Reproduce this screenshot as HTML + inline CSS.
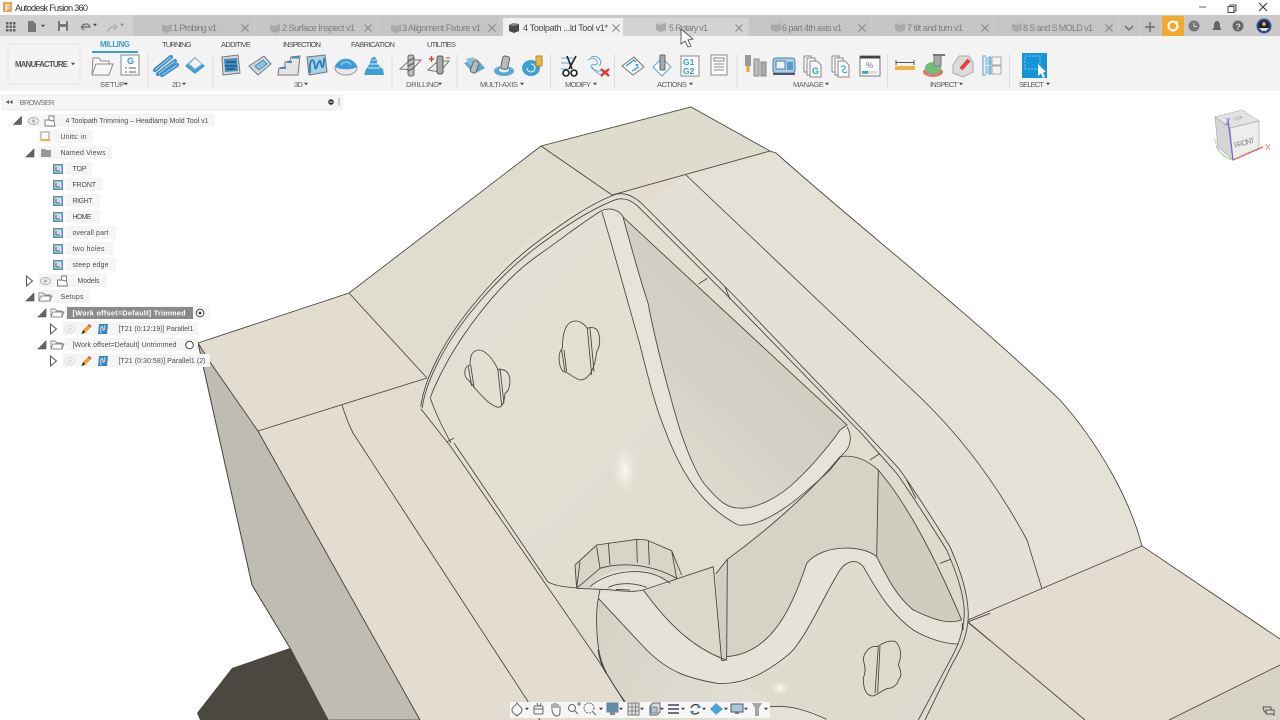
<!DOCTYPE html>
<html><head><meta charset="utf-8"><title>Autodesk Fusion 360</title>
<style>
html,body{margin:0;padding:0;background:#fff;width:1280px;height:720px;overflow:hidden}
svg{display:block}
text{font-family:"Liberation Sans",sans-serif}
.tb{font-size:9px;fill:#7e7e7e}
.rt{font-size:7.6px;fill:#4e4e4e}
.lb{font-size:7.6px;fill:#5e5e5e}
.br{font-size:7px;fill:#4e4e4e}
.x{stroke:#888;stroke-width:1.1;fill:none}
.ln{fill:none;stroke:#45453d;stroke-width:.85}
.z{fill:none;stroke:#45453d;stroke-width:2.6}
.rowbg{fill:#f5f5f5}
</style></head><body>
<svg width="1280" height="720" viewBox="0 0 1280 720" xmlns="http://www.w3.org/2000/svg">
<defs>
<filter id="b" x="-2%" y="-2%" width="104%" height="104%"><feGaussianBlur stdDeviation="0.35"/></filter>
<radialGradient id="hl"><stop offset="0" stop-color="#fbf9f2"/><stop offset=".5" stop-color="#f0ede3" stop-opacity=".6"/><stop offset="1" stop-color="#e6e3d8" stop-opacity="0"/></radialGradient>
<linearGradient id="st" x1="0.85" y1="0.1" x2="0.25" y2="0.9"><stop offset="0" stop-color="#cecbbf"/><stop offset=".6" stop-color="#d2d0c4"/><stop offset="1" stop-color="#dedbcf"/></linearGradient>
<linearGradient id="wl" x1="0" y1="0" x2="1" y2="0.3"><stop offset="0" stop-color="#d4d1c5"/><stop offset="1" stop-color="#e4e1d6"/></linearGradient>
<linearGradient id="fl" x1="0" y1="0" x2="1" y2="1"><stop offset="0" stop-color="#e4e1d5"/><stop offset="1" stop-color="#dcdacd"/></linearGradient>
<g id="box3"><path d="M-5 -3 L-1 -5 L5 -4 L5 3 L0 5 L-5 3Z" fill="#a9a9a9"/><path d="M-5 -3 L0 -2 L5 -4 L-1 -5Z" fill="#c4c4c4"/></g>
<g id="view"><rect x="-5" y="-5" width="10" height="10" fill="#5d8fb0"/><rect x="-3.5" y="-3.5" width="7" height="7" fill="#cfe0ea"/><path d="M-2 -2V2H2" stroke="#356b8f" fill="none" stroke-width="1"/></g>
<g id="eye"><ellipse cx="0" cy="0" rx="5" ry="3.4" fill="none" stroke="#b5b5b5" stroke-width="1.1"/><circle r="1.8" fill="#b5b5b5"/></g>
<g id="comp"><path d="M-5 -1 L-1 -1 L-1 -5 L4 -5 L4 0 L5 5 L-5 5Z M-1 -1 L4 0" fill="#fff" stroke="#777" stroke-width=".9"/></g>
<g id="fold"><path d="M-6 -4H-2L0 -2H5V4H-6Z M-6 4L-4 -1H7L5 4" fill="#fff" stroke="#888" stroke-width=".9"/></g>
<g id="tridn"><path d="M-4 4 L4 4 L4 -4Z" fill="#666" stroke="#444" stroke-width=".6"/></g>
<g id="triR"><path d="M-3 -5 L3 0 L-3 5Z" fill="#fff" stroke="#555" stroke-width="1"/></g>
<g id="pen"><path d="M-5 5 L-3.5 1 L2.5 -5 L5 -2.5 L-1 3.5Z" fill="#ef9a2c"/><path d="M-5 5 L-3.5 1 L-1 3.5Z" fill="#333"/><path d="M2.5 -5 L5 -2.5 L4 -1.5 L1.5 -4Z" fill="#d8503c"/></g>
<g id="par"><path d="M-4 -5H5L4 5H-5Z" fill="#3b86b8"/><path d="M-2 4 C-3 -3 -1 -5 0 0 C1 4 2 -2 2 -4" fill="none" stroke="#cfe6f3" stroke-width="1"/></g>
<g id="dd"><path d="M-2 -1.2H2L0 1.2Z" fill="#444"/></g>
<g id="xx"><path d="M-3.5 -3.5L3.5 3.5M3.5 -3.5L-3.5 3.5" class="x"/></g>
</defs>
<rect width="1280" height="720" fill="#fff"/>

<!-- MODEL -->
<path d="M198 343L210 362L258 431L420 720H328L290 648L252 585Z" fill="#bfbdb1" stroke="#45453d" stroke-width=".85"/>
<path d="M290 648L232 668L197 713L200 720H328Z" fill="#4a4840"/>
<path d="M198 343L349 293L541 146L691 107L770 151L776 153C860 228 960 305 1060 400C1100 445 1130 500 1142 546L1280 639V720H420L258 431L210 362Z" fill="#e2ddd0"/>
<path d="M541 146L691 107L770 151L612 195Z" fill="#dfdbcf"/>
<path d="M351 293L541 146L612 195L427 378Z" fill="#e0dcd0"/>
<path d="M776 153C860 228 960 305 1060 400C1100 445 1130 500 1142 546L1042 589C1027 540 1000 490 967 443C950 425 935 412 923 400L686 175Z" fill="#e5e1d6"/>
<path d="M686 175L923 400C967 443 1000 490 1027 540L1042 589L968 620L880 443L643 205Z" fill="#e4e0d5"/>
<path d="M968 622L1085 720H920Z" fill="#dedbce"/>
<path d="M1169 720L1280 665V720Z" fill="#d6d2c6"/>
<!-- pocket floor -->
<path d="M421 407C424 392 430 375 440 355C460 315 500 265 533 237C560 218 590 200 613 193C622 191 634 195 643 205L863 430L900 470C917 493 935 522 950 547C960 567 967 585 968 613C968 625 965 635 963 640L920 720H628L598 660L548 582L447 443Z" fill="url(#fl)"/>
<ellipse cx="625" cy="470" rx="13" ry="26" fill="url(#hl)"/>
<!-- strut band and grey region -->
<path d="M602 212C615 255 630 310 640 345C650 385 655 405 665 430C680 470 700 505 738 525C765 528 800 498 830 470L842 455C852 447 852 435 847 427L840 430L623 217Z" fill="#e6e3d8"/>
<path d="M623 217L847 425L840 430C830 445 810 468 797 480C780 497 755 510 738 508C728 508 720 502 707 487C700 480 690 460 680 430C668 390 655 340 648 303C642 285 632 250 623 217Z" fill="url(#st)"/>
<!-- lower wall -->
<g transform="translate(530 430) scale(.33333)">
<path d="M205 505C198 540 198 600 205 650C210 700 225 730 285 815L300 870H900C830 830 780 825 720 830L700 800L205 500Z" fill="url(#wl)"/>
<path d="M205 505L350 660C420 730 480 745 560 760C650 765 720 720 780 670C830 620 880 500 930 420C950 392 980 385 1000 410C1040 480 1080 550 1150 600C1200 630 1250 642 1285 642L1298 580L1230 578C1150 540 1080 450 1040 380C1000 345 880 340 830 400C790 520 730 670 590 680L575 690L340 480L205 490Z" fill="#e5e2d7"/>
<path d="M592 388C700 310 840 190 930 80C960 75 1000 80 1045 120L1040 380C1000 345 880 340 830 400C790 520 730 670 590 680Z" fill="#d5d3c6"/>
<path d="M1045 120C1130 220 1210 370 1295 570C1260 580 1230 578 1150 540C1100 500 1070 440 1040 380Z" fill="#cfccc0"/>
<path d="M340 480L550 410L575 690C490 650 420 590 340 480Z" fill="#dad7cb"/>
<path d="M557 432L592 388L590 690L575 692Z" fill="#d1cfc3"/>
<path d="M135 405L200 345L320 328L350 330L425 362L455 435L420 465L340 482L140 475Z" fill="#d7d4c8"/>
<path d="M180 472C210 415 350 390 420 460L340 482Z" fill="#e4e1d6"/>
<ellipse cx="750" cy="775" rx="28" ry="22" fill="url(#hl)"/>
</g>

<!-- structural lines -->
<g class="ln">
<path d="M198 343L349 293L541 146L691 107L770 151L776 153C860 228 960 305 1060 400C1100 445 1130 500 1142 546L1280 639"/>
<path d="M198 343L210 362L258 431L420 720M198 343L252 585L290 648L328 720"/>
<path d="M349 293L427 378M258 431L427 378M342 405C346 418 350 427 353 433L540 720"/>
<path d="M541 146L612 195L770 151M686 175L923 400C967 443 1000 490 1027 540L1042 589"/>
<path d="M968 620L1142 546M968 622L1085 720M1169 720L1280 665"/>
<path d="M602 212C615 255 630 310 640 345C650 385 655 405 665 430C680 470 700 505 738 525C765 528 800 498 830 470L842 455C852 447 852 435 847 427"/>
<path d="M623 217C632 250 642 285 648 303C655 340 668 390 680 430C690 460 700 480 707 487C720 502 728 508 738 508C755 510 780 497 797 480C810 468 830 445 840 430L847 425L623 217"/>
<path d="M421 409L451 447L598 660L625 703M430 397C436 415 444 430 451 443M454 443L548 582C556 586 565 587 577 588M447 442L454 438"/>
</g>
<!-- rim, pocket top -->
<g transform="translate(400 180) scale(.33333)">
<path class="z" d="M62 680C70 630 85 590 110 540C170 420 290 280 400 195C480 135 570 70 650 42C680 37 705 50 730 75L1000 345L1389 750"/>
<path class="z" d="M66 685C74 635 90 595 115 545C175 425 295 290 405 205C485 145 575 85 650 58C675 52 695 62 715 80L990 355L1374 750"/>
<path class="z" d="M92 650C150 500 290 310 420 222C480 180 550 125 605 92C630 80 660 90 672 115"/>
<path class="z" d="M895 312L922 295M975 320L990 358"/>
<!-- holes -->
<path class="z" d="M235 510C215 512 210 530 210 555C190 560 190 590 205 600C215 610 222 622 222 622C240 640 265 675 295 682C308 680 312 670 315 640C332 630 335 590 320 575C310 565 300 570 295 570C280 540 260 510 235 510Z"/>
<path class="z" d="M293 565L305 675M300 565L312 670M205 560L215 618M212 555L222 622"/>
<path class="z" d="M525 423C500 425 488 450 487 505C475 515 472 555 490 575C505 575 520 595 540 600C570 600 585 560 590 515C605 495 600 450 585 445C575 440 562 445 562 445C550 430 540 423 525 423Z"/>
<path class="z" d="M562 445L575 585M570 445L582 575M485 510L495 575M492 510L500 575"/>
</g>
<!-- lower section -->
<g transform="translate(530 430) scale(.33333)">
<path class="z" d="M930 80C960 75 1000 80 1045 120C1130 220 1210 370 1295 570C1260 580 1230 578 1150 540C1100 500 1070 440 1040 380"/>
<path class="z" d="M1045 120L1040 380C1000 345 880 340 830 400C790 520 730 670 590 680"/>
<path class="z" d="M592 388C700 310 840 190 930 80"/>
<path class="z" d="M205 505L350 660C420 730 480 745 560 760C650 765 720 720 780 670C830 620 880 500 930 420C950 392 980 385 1000 410C1040 480 1080 550 1150 600C1200 630 1250 642 1285 642"/>
<path class="z" d="M340 480C420 590 490 650 575 685L590 690"/>
<path class="z" d="M592 388L590 690L575 692L550 410L340 480C300 490 250 478 210 478L140 475M557 432L592 388M205 505C198 540 198 600 205 650C210 700 225 730 285 815M210 478L205 505"/>
<path style="fill:none;stroke:#45453d;stroke-width:5" d="M205 660C210 690 218 710 228 728M1298 580L1298 600"/>
<path class="z" d="M135 405L200 345L320 328L350 330L425 362L455 435M135 405L140 475M150 395L140 475M200 350L210 415M235 338L240 405M320 328L322 398M355 332L358 405M425 362L440 445M140 475L210 415C260 400 350 395 440 445M180 470C230 425 350 400 420 460M235 472C270 455 320 460 350 472M258 478L300 480"/>
<!-- rim lower right -->
<path class="z" d="M1000 0C1040 45 1080 85 1110 120C1160 190 1210 270 1260 350C1290 420 1312 480 1315 550C1315 620 1290 660 1265 705L1185 870"/>
<path class="z" d="M985 0C1025 45 1065 90 1100 130C1150 200 1200 280 1250 360C1280 430 1302 490 1303 550C1300 620 1275 665 1250 710L1165 870"/>
<path class="z" d="M1020 90L1050 70M1230 400L1262 388M1130 150L1158 205M1315 575L1380 550M1315 578L1380 632"/>
<path class="z" d="M720 830C780 825 830 840 890 868"/>
<!-- hole 3 -->
<path class="z" d="M1040 650C1020 645 1000 670 1000 690C1003 705 1010 715 1000 745C1000 780 1010 798 1030 798C1050 790 1060 778 1075 775C1090 775 1105 760 1105 750C1115 740 1115 725 1105 705C1115 680 1115 650 1095 634C1075 630 1060 640 1040 650Z"/>
<path class="z" d="M1045 650L1035 790M1050 648L1043 788"/>
</g>

<!-- UI -->
<g filter="url(#b)">
<!-- title bar -->
<rect x="3" y="2" width="9" height="10" fill="#e8a35a"/>
<text x="5" y="11" font-size="9" font-weight="bold" fill="#fff">F</text>
<text x="15" y="11" font-size="9.2" fill="#333" textLength="73">Autodesk Fusion 360</text>
<rect x="1199" y="6.5" width="7" height="1" fill="#666"/>
<rect x="1230" y="5" width="6" height="6" fill="#fff" stroke="#444"/><rect x="1228" y="7" width="6" height="6" fill="#fff" stroke="#444" transform="translate(0 -.5)"/>
<path d="M1259 3L1267 11M1267 3L1259 11" stroke="#333" fill="none"/>

<!-- strip -->
<rect y="15" width="1280" height="21" fill="#c9c9c9"/>
<rect y="15" width="133" height="21" fill="#d1d1d1"/>
<g fill="#666"><rect x="6" y="22" width="2.5" height="2.5"/><rect x="9.5" y="22" width="2.5" height="2.5"/><rect x="13" y="22" width="2.5" height="2.5"/><rect x="6" y="25.5" width="2.5" height="2.5"/><rect x="9.5" y="25.5" width="2.5" height="2.5"/><rect x="13" y="25.5" width="2.5" height="2.5"/><rect x="6" y="29" width="2.5" height="2.5"/><rect x="9.5" y="29" width="2.5" height="2.5"/><rect x="13" y="29" width="2.5" height="2.5"/></g>
<path d="M28 21H33L36 24V32H28Z" fill="#777"/><use href="#dd" x="43" y="26"/>
<rect x="58" y="21" width="10" height="10" rx="1" fill="#777"/><rect x="60" y="21" width="6" height="3" fill="#ddd"/><rect x="60" y="27" width="6" height="4" fill="#ddd"/>
<path d="M81 27H90C89 24 86 23 84 25M81 27L84 24M81 27L84 30" fill="none" stroke="#777" stroke-width="1.4"/><use href="#dd" x="95" y="25"/>
<path d="M117 27C108 26 108 31 108 32M117 27L114 24M117 27L114 30" fill="none" stroke="#aaa" stroke-width="1.2"/><use href="#dd" x="122" y="25" opacity=".5"/>
<g fill="#c5c5c5"><rect x="133" y="16" width="120" height="20"/><rect x="256" y="16" width="121" height="20"/><rect x="379" y="16" width="120" height="20"/><rect x="750" y="16" width="120" height="20"/><rect x="873" y="16" width="120" height="20"/><rect x="996" y="16" width="121" height="20"/><rect x="1120" y="16" width="18" height="20"/><rect x="1141" y="16" width="19" height="20"/></g>
<rect x="623" y="18" width="125" height="18" fill="#d3d3d3"/>
<rect x="503" y="18" width="120" height="18" fill="#f0f0f0"/>
<use href="#box3" x="167" y="28"/><use href="#box3" x="275" y="28"/><use href="#box3" x="396" y="28"/><use href="#box3" x="661" y="27"/><use href="#box3" x="776" y="27"/><use href="#box3" x="900" y="27"/><use href="#box3" x="1017" y="27"/>
<g transform="translate(514 28)"><path d="M-5 -3 L-1 -5 L5 -4 L5 3 L0 5 L-5 3Z" fill="#4a4a4a"/><path d="M-5 -3 L0 -2 L5 -4 L-1 -5Z" fill="#888"/></g>
<text class="tb" x="173" y="31" textLength="44">1 Probing v1</text>
<text class="tb" x="282" y="31" textLength="73">2 Surface Inspect v1</text>
<text class="tb" x="402" y="31" textLength="79">3 Alignment Fixture v1</text>
<text x="523" y="31" font-size="9" fill="#444" textLength="85">4 Toolpath ...ld Tool v1*</text>
<text class="tb" x="669" y="31" textLength="39">5 Rotary v1</text>
<text class="tb" x="782" y="31" textLength="60">6 part 4th axis v1</text>
<text class="tb" x="907" y="31" textLength="56">7 tilt and turn v1</text>
<text class="tb" x="1023" y="31" textLength="70">8 S and S MOLD v1</text>
<use href="#xx" x="245" y="28"/><use href="#xx" x="368" y="28"/><use href="#xx" x="492" y="28"/><use href="#xx" x="616" y="28"/><use href="#xx" x="739" y="28"/><use href="#xx" x="862" y="28"/><use href="#xx" x="985" y="28"/><use href="#xx" x="1109" y="28"/>
<path d="M1125 26L1129 30L1133 26" fill="none" stroke="#777" stroke-width="1.6"/>
<path d="M1150 22V32M1145 27H1155" fill="none" stroke="#777" stroke-width="1.8"/>
<rect x="1162" y="16" width="22" height="21" fill="#f3a92e"/>
<circle cx="1173" cy="26" r="4.5" fill="none" stroke="#fff" stroke-width="2"/><path d="M1173 22L1178 21V26" fill="#fff"/>
<circle cx="1194" cy="26" r="5.5" fill="#777"/><path d="M1194 23V26.5H1197" stroke="#ddd" fill="none"/>
<path d="M1217 21C1214 21 1214 25 1214 27L1212.5 30H1221.5L1220 27C1220 25 1220 21 1217 21Z" fill="#666"/>
<circle cx="1238" cy="26" r="5.5" fill="#666"/><text x="1235.6" y="29.5" font-size="8.5" font-weight="bold" fill="#ddd">?</text>
<circle cx="1264" cy="26" r="7.5" fill="#2e4f9a"/><circle cx="1264" cy="26" r="5.5" fill="#222"/><path d="M1259 28H1269L1266 31H1262Z" fill="#ddd"/><circle cx="1264" cy="24" r="2" fill="#b9a38a"/>

<!-- ribbon -->
<rect y="36" width="1280" height="55" fill="#f3f3f3"/>
<rect x="8" y="44" width="72" height="40" rx="2" fill="#f4f4f4" stroke="#e5e5e5"/>
<text x="15" y="67" font-size="7.8" font-weight="bold" fill="#555" textLength="53">MANUFACTURE</text><use href="#dd" x="73" y="64"/>
<text x="100" y="47" font-size="7.8" font-weight="bold" fill="#3a9fc8" textLength="30">MILLING</text>
<rect x="92" y="51" width="46" height="2" fill="#3a9fc8"/>
<text class="rt" x="162" y="47" textLength="29.5">TURNING</text>
<text class="rt" x="221" y="47" textLength="30">ADDITIVE</text>
<text class="rt" x="283" y="47" textLength="38">INSPECTION</text>
<text class="rt" x="351" y="47" textLength="44">FABRICATION</text>
<text class="rt" x="427" y="47" textLength="29">UTILITIES</text>
<g fill="#dedede"><rect x="147.500" y="54" width="1" height="34"/><rect x="212.500" y="54" width="1" height="34"/><rect x="391.500" y="54" width="1" height="34"/><rect x="456.500" y="54" width="1" height="34"/><rect x="550" y="54" width="1" height="34"/><rect x="614" y="54" width="1" height="34"/><rect x="736.500" y="54" width="1" height="34"/><rect x="887" y="54" width="1" height="34"/><rect x="1009" y="54" width="1" height="34"/></g>
<text class="lb" x="100" y="87" textLength="25">SETUP</text><use href="#dd" x="126" y="84"/>
<text class="lb" x="172" y="87" textLength="9">2D</text><use href="#dd" x="184" y="84"/>
<text class="lb" x="294" y="87" textLength="9">3D</text><use href="#dd" x="306" y="84"/>
<text class="lb" x="406" y="87" textLength="33">DRILLING</text><use href="#dd" x="440" y="84"/>
<text class="lb" x="480" y="87" textLength="38">MULTI-AXIS</text><use href="#dd" x="522" y="84"/>
<text class="lb" x="565" y="87" textLength="26">MODIFY</text><use href="#dd" x="595" y="84"/>
<text class="lb" x="657" y="87" textLength="30">ACTIONS</text><use href="#dd" x="691" y="84"/>
<text class="lb" x="793" y="87" textLength="31">MANAGE</text><use href="#dd" x="827" y="84"/>
<text class="lb" x="930" y="87" textLength="28">INSPECT</text><use href="#dd" x="961" y="84"/>
<text class="lb" x="1019" y="87" textLength="25">SELECT</text><use href="#dd" x="1048" y="84"/>

<!-- ribbon icons -->
<g transform="translate(102 66)"><path d="M-10 9L-9 -8H-3L-1 -5H7V-1" fill="#f7f7f7" stroke="#8a8a8a"/><path d="M-10 9L-6 -2H11L7 9Z" fill="#f7f7f7" stroke="#8a8a8a"/></g>
<g transform="translate(130 65)"><rect x="-9" y="-10" width="18" height="20" fill="#fbfbfb" stroke="#888"/><text x="-3" y="-1" font-size="9" font-weight="bold" fill="#2d9bd0">G</text><path d="M-5 3H-3M-1 3H6M-5 7H-3M-1 7H6" stroke="#666"/></g>
<g transform="translate(166 66)"><path d="M-11 4L5 -9M-8 8L9 -5M-4 9L11 -1" stroke="#3e8fc6" stroke-width="4.2" stroke-linecap="round" fill="none"/><path d="M-11 4L5 -9M-8 8L9 -5M-4 9L11 -1" stroke="#a8d3ea" stroke-width="1" fill="none"/></g>
<g transform="translate(195 66)"><path d="M-10 0L0 -9L10 0L0 8Z" fill="#3e9fd2"/><path d="M-6 -2L0 -8L7 -2L0 3Z" fill="#f3f3f3" stroke="#bbb"/></g>
<g transform="translate(231 65)"><path d="M-9 -8L7 -10L9 8L-8 10Z" fill="#d8d8d8" stroke="#777"/><path d="M-7 -6L6 -7L7 6L-6 7Z" fill="#3e8fc6"/><path d="M-5 -3H5M-6 1H6M-5 4H4" stroke="#123e60"/></g>
<g transform="translate(260 66)"><path d="M-11 0L4 -10L11 -2L-2 9Z" fill="#d8d8d8" stroke="#6a7f8e"/><path d="M-5 0L3 -6L7 -2L-1 4Z" fill="#8fc0dc" stroke="#3e8fc6"/></g>
<g transform="translate(289 66)"><path d="M-11 9L-10 2L-4 1V-4L1 -5L2 -9L11 -10L9 9Z" fill="#e4e4e4" stroke="#777"/><path d="M-9 2H-3M-2 -4H3M3 -8.500H10" stroke="#3e8fc6" stroke-width="2" fill="none"/></g>
<g transform="translate(317 65)"><path d="M-10 -8L8 -10L10 7L-8 10Z" fill="#a7d1e8" stroke="#777"/><path d="M-7 8C-8 -8 -3 -8 -2 2C-1 9 2 -10 4 -2C5 5 7 3 7 -7" fill="none" stroke="#2f7fb6" stroke-width="1.8"/></g>
<g transform="translate(346 66)"><ellipse cy="2" rx="11" ry="7" fill="#e9e9e9" stroke="#999"/><path d="M-11 1C-8 -10 8 -10 11 1C6 4 -6 4 -11 1Z" fill="#3d9dd4"/><path d="M-5 -1C-3 -5 3 -5 5 -1" stroke="#b8dff3" fill="none"/></g>
<g transform="translate(374 66)"><path d="M-10 9L-8 3C-6 2 -6 -1 -4 -2C-4 -6 -2 -9 0 -9C2 -9 3 -6 3 -3C5 -1 6 2 9 3L10 9Z" fill="#3e9fd2"/><path d="M-6 2H6M-4 -2H4M-2 -6H2" stroke="#d9eef8"/></g>
<g transform="translate(411 66)"><path d="M-11 3L-1 -6H10L1 4Z" fill="#eee" stroke="#777"/><rect x="-3" y="-11" width="6" height="21" rx="2" fill="#bbb" stroke="#666"/><path d="M-3 -5L3 -8M-3 0L3 -3M-3 5L3 2" stroke="#555"/></g>
<g transform="translate(439 66)"><path d="M-11 4L-1 -5H10L1 6Z" fill="#eee" stroke="#777"/><rect x="-2" y="-10" width="6" height="18" rx="2" fill="#aaa" stroke="#555"/><path d="M-10 -7H-5M-7.500 -10V-4" stroke="#e03a2e" stroke-width="1.4"/><path d="M7 -8H11" stroke="#e03a2e"/></g>
<g transform="translate(475 66)"><path d="M-11 -3L2 -7L10 2L-1 8Z" fill="#5aa7d6"/><path d="M-9 -7L-2 -9L6 -3L-4 1Z" fill="#8cc0dc"/><rect x="-3" y="-5" width="6" height="12" rx="2" transform="rotate(20)" fill="#bbb" stroke="#666"/></g>
<g transform="translate(504 66)"><ellipse cy="5" rx="10" ry="5" fill="#5aa7d6"/><ellipse cy="4" rx="5" ry="2.500" fill="#d9eef8"/><rect x="-3" y="-10" width="7" height="13" rx="2" transform="rotate(12)" fill="#bbb" stroke="#666"/></g>
<g transform="translate(532 66)"><ellipse cx="-1" cy="2" rx="9" ry="8" fill="#3e9fd2"/><path d="M-5 2A4 4 0 1 0 -1 -2" stroke="#fff" fill="none"/><rect x="4" y="-10" width="6" height="10" fill="#f0b840" stroke="#b98a20"/></g>
<g transform="translate(569 66)"><path d="M-8 -8H4M-8 -3H4M-8 3H0" stroke="#5aa7d6" fill="none"/><path d="M-2 -10L3 3M7 -10L0 3" stroke="#222" stroke-width="1.6"/><circle cx="-3" cy="7" r="3" fill="none" stroke="#222" stroke-width="1.6"/><circle cx="5" cy="7" r="3" fill="none" stroke="#222" stroke-width="1.6"/></g>
<g transform="translate(598 66)"><path d="M-10 -6C-4 -11 2 -4 -2 -1C-8 -3 -9 2 -3 4C2 7 3 3 8 5M-7 -9C0 -12 6 -4 1 0M-6 1C-3 6 0 8 4 9" fill="none" stroke="#6aa9cf"/><path d="M3 3L11 10M11 3L3 10" stroke="#e03a2e" stroke-width="2.4"/></g>
<g transform="translate(633 66)"><path d="M-11 0L1 -9L11 1L0 9Z" fill="#fafafa" stroke="#777"/><path d="M-7 0L1 -6L3 -4M-1 5L6 1" stroke="#2f9ad0" stroke-width="1.3" fill="none"/><circle cx="4" cy="-1" r="1.300" fill="#2f9ad0"/></g>
<g transform="translate(662 66)"><path d="M-9 1L0 -8L9 1L0 10Z" fill="#fafafa" stroke="#5aa7d6"/><rect x="-2" y="-11" width="5" height="15" rx="1" fill="#aaa" stroke="#666"/></g>
<g transform="translate(690 66)"><rect x="-9" y="-10" width="18" height="20" fill="#fff" stroke="#888"/><text x="-7" y="-1" font-family="Liberation Mono" font-size="8.5" font-weight="bold" fill="#2d9bd0">G1</text><text x="-7" y="8" font-family="Liberation Mono" font-size="8.5" font-weight="bold" fill="#2d9bd0">G2</text></g>
<g transform="translate(719 65)"><rect x="-8" y="-10" width="16" height="20" fill="#fbfbfb" stroke="#888"/><rect x="-5" y="-7" width="10" height="3" fill="none" stroke="#888"/><path d="M-5 -1H5M-5 2H5M-5 5H5" stroke="#888"/></g>
<g transform="translate(755 66)"><rect x="-10" y="-11" width="6" height="11" fill="#999"/><rect x="-8.500" y="0" width="3" height="6" fill="#e8a33c"/><rect x="-1" y="-7" width="5" height="17" fill="#bbb" stroke="#888"/><rect x="6" y="-4" width="5" height="14" fill="#aaa" stroke="#888"/></g>
<g transform="translate(784 66)"><rect x="-11" y="-8" width="22" height="15" rx="3" fill="#a9cfe6" stroke="#4d7f9f"/><rect x="-8" y="-5" width="9" height="8" fill="#e9f1f6" stroke="#4d7f9f"/><rect x="3" y="-4" width="6" height="8" fill="#5a9ac6"/><rect x="-11" y="7" width="22" height="2" fill="#556"/></g>
<g transform="translate(813 66)" fill="#fafafa" stroke="#888"><path d="M-9 -10H-2L-2 6H-9Z"/><path d="M-6 -8H2V9H-6Z"/><path d="M-3 -5H4L8 -1V11H-3Z"/><text x="-1" y="8" font-size="9" font-weight="bold" fill="#2d9bd0" stroke="none">G</text></g>
<g transform="translate(841 66)" fill="#fafafa" stroke="#888"><path d="M-9 -10H-2V6H-9Z"/><path d="M-6 -8H2V9H-6Z"/><path d="M-3 -5H4L8 -1V11H-3Z"/><path d="M0 1C3 -2 6 2 3 3C0 4 2 8 6 6" stroke="#2d9bd0" fill="none"/></g>
<g transform="translate(870 66)"><rect x="-10" y="-10" width="20" height="20" fill="#fafafa" stroke="#777"/><rect x="-10" y="-10" width="20" height="2.500" fill="#444"/><text x="-4" y="2" font-size="8" fill="#777">%</text><rect x="-8" y="5" width="15" height="3" fill="#ddd"/><rect x="-8" y="5" width="6" height="3" fill="#4ea3d6"/></g>
<g transform="translate(905 66)"><path d="M-9 -6V-1M9 -6V-1M-9 -3.500H9" stroke="#555" fill="none"/><rect x="-10" y="0" width="20" height="4" fill="#efb43a"/></g>
<g transform="translate(934 66)"><ellipse cx="-1" cy="6" rx="10" ry="5" fill="#e07a6a"/><ellipse cx="-1" cy="2" rx="8" ry="6" fill="#6fc07a"/><rect x="0" y="-11" width="7" height="11" fill="#aaa" stroke="#777"/><path d="M-1 -11H11" stroke="#777" stroke-width="2"/></g>
<g transform="translate(963 66)"><path d="M-10 -1L-4 -10H6L10 -3V6L0 11L-10 7Z" fill="#dcdcdc" stroke="#aaa"/><path d="M-2 3L6 -6" stroke="#e0433c" stroke-width="4"/></g>
<g transform="translate(992 66)"><rect x="-7" y="-9" width="7" height="8" fill="#a9d1ea"/><rect x="-7" y="0" width="7" height="8" fill="#a9d1ea"/><rect x="0" y="-9" width="9" height="8" fill="#f3f3f3" stroke="#aaa"/><rect x="0" y="0" width="9" height="8" fill="#f3f3f3" stroke="#aaa"/><path d="M-6 -10H-9V9H-6" stroke="#4ea3d6" fill="none"/><path d="M-2 -10V9" stroke="#4ea3d6"/></g>
<rect x="1022" y="53" width="25" height="25" fill="#1494d6"/>
<rect x="1025" y="56" width="15" height="13" fill="none" stroke="#7fcdf0" stroke-dasharray="2 1.500"/>
<path d="M1038 64L1038 76L1041 73.500L1043 78L1045 77L1043 72.500L1046 72Z" fill="#fff"/>

<!-- browser -->
<rect x="2" y="95" width="340" height="15" fill="#f5f5f5" stroke="#ececec"/>
<path d="M6 102L9 100V104ZM9.500 102L12.500 100V104Z" fill="#555"/>
<text x="19.500" y="105" font-size="7.6" fill="#777" textLength="35">BROWSER</text>
<circle cx="331" cy="102" r="2.800" fill="#333"/><rect x="329" y="101.500" width="4" height="1" fill="#ddd"/>
<rect x="338" y="98" width="2" height="8" fill="#ccc"/>

<rect class="rowbg" x="27" y="114" width="188" height="13"/>
<rect class="rowbg" x="38" y="130" width="55" height="13"/>
<rect class="rowbg" x="38" y="146" width="74" height="13"/>
<rect class="rowbg" x="65" y="162" width="27" height="13"/>
<rect class="rowbg" x="65" y="178" width="38" height="13"/>
<rect class="rowbg" x="65" y="194" width="35" height="13"/>
<rect class="rowbg" x="65" y="210" width="35" height="13"/>
<rect class="rowbg" x="65" y="226" width="51" height="13"/>
<rect class="rowbg" x="65" y="242" width="48" height="13"/>
<rect class="rowbg" x="65" y="258" width="51" height="13"/>
<rect class="rowbg" x="38" y="274" width="69" height="13"/>
<rect class="rowbg" x="38" y="290" width="52" height="13"/>
<rect class="rowbg" x="65" y="306" width="145" height="13"/>
<rect class="rowbg" x="62" y="322" width="136" height="13"/>
<rect class="rowbg" x="65" y="338" width="133" height="13"/>
<rect class="rowbg" x="62" y="354" width="148" height="13"/>

<use href="#tridn" x="17.500" y="120.500"/><use href="#eye" x="33.500" y="121"/><use href="#comp" x="50" y="121"/>
<text class="br" x="65.500" y="123" textLength="143">4 Toolpath Trimming – Headlamp Mold Tool v1</text>
<path d="M41 132H49V140H41Z" fill="#fff" stroke="#999"/><path d="M41 140H50" stroke="#e0a020" stroke-width="1.600"/>
<text class="br" x="60.500" y="139" textLength="26">Units: in</text>
<use href="#tridn" x="30" y="153"/><path d="M41 149H45L46 150H51V157H41Z" fill="#999"/>
<text class="br" x="60.500" y="155" textLength="45">Named Views</text>
<use href="#view" x="58" y="169"/><text class="br" x="72.500" y="171" textLength="14">TOP</text>
<use href="#view" x="58" y="185"/><text class="br" x="72.500" y="187" textLength="23.500">FRONT</text>
<use href="#view" x="58" y="201"/><text class="br" x="72.500" y="203" textLength="20">RIGHT</text>
<use href="#view" x="58" y="217"/><text class="br" x="72.500" y="219" textLength="19">HOME</text>
<use href="#view" x="58" y="233"/><text class="br" x="72.500" y="235" textLength="36">overall part</text>
<use href="#view" x="58" y="249"/><text class="br" x="72.500" y="251" textLength="32">two holes</text>
<use href="#view" x="58" y="265"/><text class="br" x="72.500" y="267" textLength="36">steep edge</text>
<use href="#triR" x="29.500" y="281"/><use href="#eye" x="45.500" y="281"/><use href="#comp" x="62.500" y="281"/>
<text class="br" x="77.500" y="283" textLength="22">Models</text>
<use href="#tridn" x="30" y="297"/><use href="#fold" x="45" y="297"/>
<text class="br" x="60.500" y="299" textLength="23">Setups</text>
<use href="#tridn" x="42" y="313"/><use href="#fold" x="57" y="313"/>
<rect x="67" y="307" width="126" height="12" fill="#8b8b8b"/>
<text x="72.500" y="315.500" font-size="7.200" font-weight="bold" fill="#fff" textLength="113">[Work offset=Default] Trimmed</text>
<circle cx="200" cy="313" r="3.800" fill="#fff" stroke="#333" stroke-width=".9"/><circle cx="200" cy="313" r="1.400" fill="#333"/>
<use href="#triR" x="53.500" y="329"/><use href="#eye" x="70" y="329" opacity=".35"/><use href="#pen" x="86.500" y="329"/><use href="#par" x="103" y="329"/>
<text class="br" x="118.500" y="331" textLength="75">[T21 (0:12:19)] Parallel1</text>
<use href="#tridn" x="42" y="345"/><use href="#fold" x="57" y="345"/>
<text class="br" x="72.500" y="347" textLength="104">[Work offset=Default] Untrimmed</text>
<circle cx="189.500" cy="345" r="3.800" fill="#fff" stroke="#333" stroke-width=".9"/>
<use href="#triR" x="53.500" y="361"/><use href="#eye" x="70" y="361" opacity=".35"/><use href="#pen" x="86.500" y="361"/><use href="#par" x="103" y="361"/>
<text class="br" x="118.500" y="363" textLength="87">[T21 (0:30:58)] Parallel1 (2)</text>

<!-- view cube -->
<path d="M1215 117L1242 110L1259 121L1230 128Z" fill="#e3e3e3" stroke="#aaa" stroke-width=".7" stroke-dasharray="2 1"/>
<path d="M1230 128L1259 121L1259 148L1233 160Z" fill="#ededed" stroke="#aaa" stroke-width=".7"/>
<path d="M1215 117L1230 128L1233 160L1218 147Z" fill="#d5d5d5" stroke="#aaa" stroke-width=".7"/>
<path d="M1233 160C1225 158 1218 152 1216 145" stroke="#9fd59f" fill="none" stroke-width="1.200"/>
<path d="M1233 160L1263 147" stroke="#dd6a6a" stroke-width="1.400"/>
<path d="M1233 160L1228 120" stroke="#6a6ad0" stroke-width="1.200"/>
<text x="1225" y="125" font-size="9" fill="#7a7ad8">Z</text>
<text x="1265" y="150" font-size="8.500" fill="#dd7a7a">X</text>
<text x="1213" y="144" font-size="8.500" fill="#a9dca9">Y</text>
<text x="1235" y="148" font-size="7.500" fill="#888" transform="rotate(-16 1235 148)" textLength="21">FRONT</text>
<text x="1234" y="121" font-size="4.500" fill="#999" transform="rotate(-14 1234 121)">TOP</text>

<!-- nav bar -->
<rect x="510" y="702" width="260" height="16" fill="#f6f6f6"/>
<g fill="none" stroke="#666" stroke-width="1">
<path d="M512 710C512 706 516 706 517 703C518 706 522 706 522 710C522 714 518 714 517 716C516 714 512 714 512 710Z"/>
<rect x="534" y="706" width="9" height="8" rx="1"/><path d="M534 709H543M537 703L538 706M541 703L540 706"/>
<path d="M552 709V704M554 708V703M556 708V703M558 708V704M560 711V706M552 709C552 714 555 716 557 716C560 716 560 713 560 711"/>
<circle cx="572" cy="708" r="3.500"/><path d="M575 711L578 714M577 704H581M579 702V706"/>
<circle cx="589" cy="708" r="5" stroke-dasharray="2 1"/><path d="M593 712L596 715"/>
</g>
<g><rect x="607" y="703" width="11" height="9" fill="#5d8fb0" stroke="#6a7f8e"/><rect x="610" y="712" width="5" height="3" fill="#888"/>
<rect x="628" y="703" width="11" height="12" fill="#ddd" stroke="#777"/><path d="M628 707H639M628 711H639M632 703V715M635.500 703V715" stroke="#777" stroke-width=".8"/>
<path d="M650 706L653 703H660V712L657 715H650Z" fill="#ddd" stroke="#666"/><rect x="651" y="707" width="6" height="6" fill="#aac6d8" stroke="#666" stroke-width=".7"/>
<path d="M668 705H679M668 709H679M668 713H679" stroke="#445" stroke-width="1.600"/>
<path d="M691 708A5 5 0 0 1 700 707M699 712A5 5 0 0 1 691 712" stroke="#333" fill="none" stroke-width="1.200"/><path d="M698 704L701 708L697 708ZM693 715L690 711L694 711Z" fill="#3e8fc6"/>
<path d="M710 709L716 703L723 709L716 715Z" fill="#4ea3d6"/>
<rect x="731" y="704" width="12" height="8" fill="#aac6d8" stroke="#556"/><rect x="735" y="712" width="4" height="2" fill="#777"/>
<path d="M752 703H762L759 708V716H755V708Z" fill="#a5a5a5"/></g>
<use href="#dd" x="527" y="709"/><use href="#dd" x="601" y="709"/><use href="#dd" x="621" y="709"/><use href="#dd" x="642" y="709"/><use href="#dd" x="662" y="709"/><use href="#dd" x="683" y="709"/><use href="#dd" x="704" y="709"/><use href="#dd" x="726" y="709"/><use href="#dd" x="746" y="709"/><use href="#dd" x="766" y="709"/>

<path d="M1263 707H1271V713H1266L1264 711Z" fill="none" stroke="#555"/><path d="M1266 710H1274V715L1272 714H1266Z" fill="#d6d2c6" stroke="#555"/>

<!-- cursor -->
<path d="M681 29L681 44L685 41L688 47L691 46L688 40L693 39Z" fill="#fff" stroke="#555" stroke-width=".9"/>
</g>
</svg>
</body></html>
